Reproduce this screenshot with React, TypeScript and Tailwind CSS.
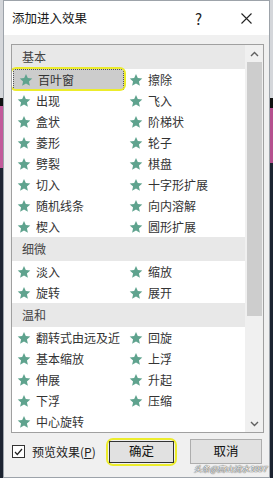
import React from 'react';

type Group = { title: string; rows: string[][] };

const groups: Group[] = [
  {
    title: '基本',
    rows: [
      ['百叶窗', '擦除'],
      ['出现', '飞入'],
      ['盒状', '阶梯状'],
      ['菱形', '轮子'],
      ['劈裂', '棋盘'],
      ['切入', '十字形扩展'],
      ['随机线条', '向内溶解'],
      ['楔入', '圆形扩展'],
    ],
  },
  {
    title: '细微',
    rows: [
      ['淡入', '缩放'],
      ['旋转', '展开'],
    ],
  },
  {
    title: '温和',
    rows: [
      ['翻转式由远及近', '回旋'],
      ['基本缩放', '上浮'],
      ['伸展', '升起'],
      ['下浮', '压缩'],
      ['中心旋转'],
    ],
  },
];

const font = { fontFamily: '"Noto Sans CJK SC", "Noto Sans", sans-serif' };

function Star() {
  return (
    <svg width="14" height="14" viewBox="0 0 24 24" className="shrink-0">
      <path
        d="M12 1.5l3.1 7.1 7.7.7-5.8 5.1 1.7 7.6L12 18l-6.7 4 1.7-7.6-5.8-5.1 7.7-.7z"
        fill="#5fa38e"
      />
    </svg>
  );
}

// ── One effect cell ─────────────────────────────────────────────────────────
function Cell({ label, selected }: { label?: string; selected?: boolean }) {
  if (!label) return <div className="w-[112px]" />;
  return (
    <div className="relative w-[112px] h-[21px]">
      <div
        className={`flex items-center h-full pl-[5px] gap-[5px] ${
          selected ? 'bg-[#cccccc] border border-dotted border-[#555] ml-[1px] pl-[4px]' : ''
        }`}
      >
        <Star />
        <span className="text-[12px] leading-none text-[#333] whitespace-nowrap">{label}</span>
      </div>
      {selected && (
        <div className="absolute -left-[2px] -right-[2px] -top-[2px] -bottom-[1px] rounded-[6px] border-[2.5px] border-[#ecec2c]" />
      )}
    </div>
  );
}

function Chevron({ up }: { up?: boolean }) {
  return (
    <svg width="9" height="6" viewBox="0 0 9 6">
      <path
        d={up ? 'M1 5l3.5-3.5L8 5' : 'M1 1l3.5 3.5L8 1'}
        stroke="#606060"
        strokeWidth="1.4"
        fill="none"
      />
    </svg>
  );
}

export default function App() {
  return (
    <div className="w-[273px] h-[478px] flex overflow-hidden bg-[#1d2431]" style={font}>
      {/* background behind the dialog */}
      <div className="w-[3px] flex flex-col">
        <div className="h-[98px] bg-[#d4d6da]" />
        <div className="h-[8px] bg-[#111]" />
        <div className="h-[62px] bg-[#c25a9a]" />
        <div className="flex-1 bg-[#1d2431]" />
      </div>

      {/* dialog */}
      <div className="w-[267px] h-[478px] flex flex-col border border-[#9da3aa] bg-[#f0f0f0] relative">
        {/* title bar */}
        <div className="h-[34px] bg-white flex items-center shrink-0">
          <span className="ml-[8px] text-[12.5px] text-[#1a1a1a]">添加进入效果</span>
          <span className="ml-auto mr-[39px] text-[15px] text-[#222] leading-none">?</span>
          <svg width="11" height="11" viewBox="0 0 11 11" className="mr-[17px]">
            <path d="M0.5 0.5l10 10M10.5 0.5l-10 10" stroke="#222" strokeWidth="1.1" />
          </svg>
        </div>

        {/* list box */}
        <div className="mt-[9px] ml-[7px] w-[253px] h-[389px] border border-[#a0a0a0] bg-white flex shrink-0">
          <div className="w-[233px] h-full overflow-hidden">
            {groups.map((g) => (
              <div key={g.title}>
                <div className="h-6 bg-[#e8e8e8] flex items-center pl-[10px] text-[12px] text-[#444]">
                  {g.title}
                </div>
                {g.rows.map((r, i) => (
                  <div key={i} className="flex h-[21px]">
                    <Cell label={r[0]} selected={g.title === '基本' && i === 0} />
                    <Cell label={r[1]} />
                  </div>
                ))}
              </div>
            ))}
          </div>
          {/* scrollbar */}
          <div className="w-[18px] h-full bg-[#f0f0f0] flex flex-col items-center">
            <div className="h-[17px] flex items-center justify-center">
              <Chevron up />
            </div>
            <div className="w-[15px] h-[254px] bg-[#cdcdcd]" />
            <div className="flex-1" />
            <div className="h-[17px] flex items-center justify-center">
              <Chevron />
            </div>
          </div>
        </div>

        {/* footer */}
        <div className="mt-[5px] ml-[7px] w-[253px] h-[27px] flex items-center">
          <div className="w-[95px] flex items-center">
            <div className="ml-[1px] w-[13px] h-[13px] border border-[#333] bg-white flex items-center justify-center">
              <svg width="9" height="8" viewBox="0 0 9 8">
                <path d="M1 4l2.3 2.5L8 1" stroke="#222" strokeWidth="1.2" fill="none" />
              </svg>
            </div>
            <span className="ml-[7px] text-[12px] text-[#222] whitespace-nowrap">
              预览效果(<span className="underline">P</span>)
            </span>
          </div>
          <div className="w-[71px] h-[28px] rounded-[7px] border-[2.5px] border-[#ecec2c] p-[1px]">
            <div className="h-full border border-[#333] bg-[#e1e1e1] flex items-center justify-center text-[12.5px] text-[#111]">
              确定
            </div>
          </div>
          <div className="ml-[13px] w-[72px] h-[25px] border border-[#adadad] bg-[#e1e1e1] flex items-center justify-center text-[12.5px] text-[#111]">
            取消
          </div>
        </div>

        <div className="absolute right-[2px] bottom-[4px] text-[8px] italic text-white [text-shadow:0_0_1px_#333,0_0_1px_#333] leading-none">
          头条@高山流水3997
        </div>
      </div>

      <div className="w-[3px] flex flex-col">
        <div className="h-[98px] bg-[#d4d6da]" />
        <div className="h-[10px] bg-[#111]" />
        <div className="h-[55px] bg-[#b5508e]" />
        <div className="flex-1 bg-[#1d2431]" />
      </div>
    </div>
  );
}
